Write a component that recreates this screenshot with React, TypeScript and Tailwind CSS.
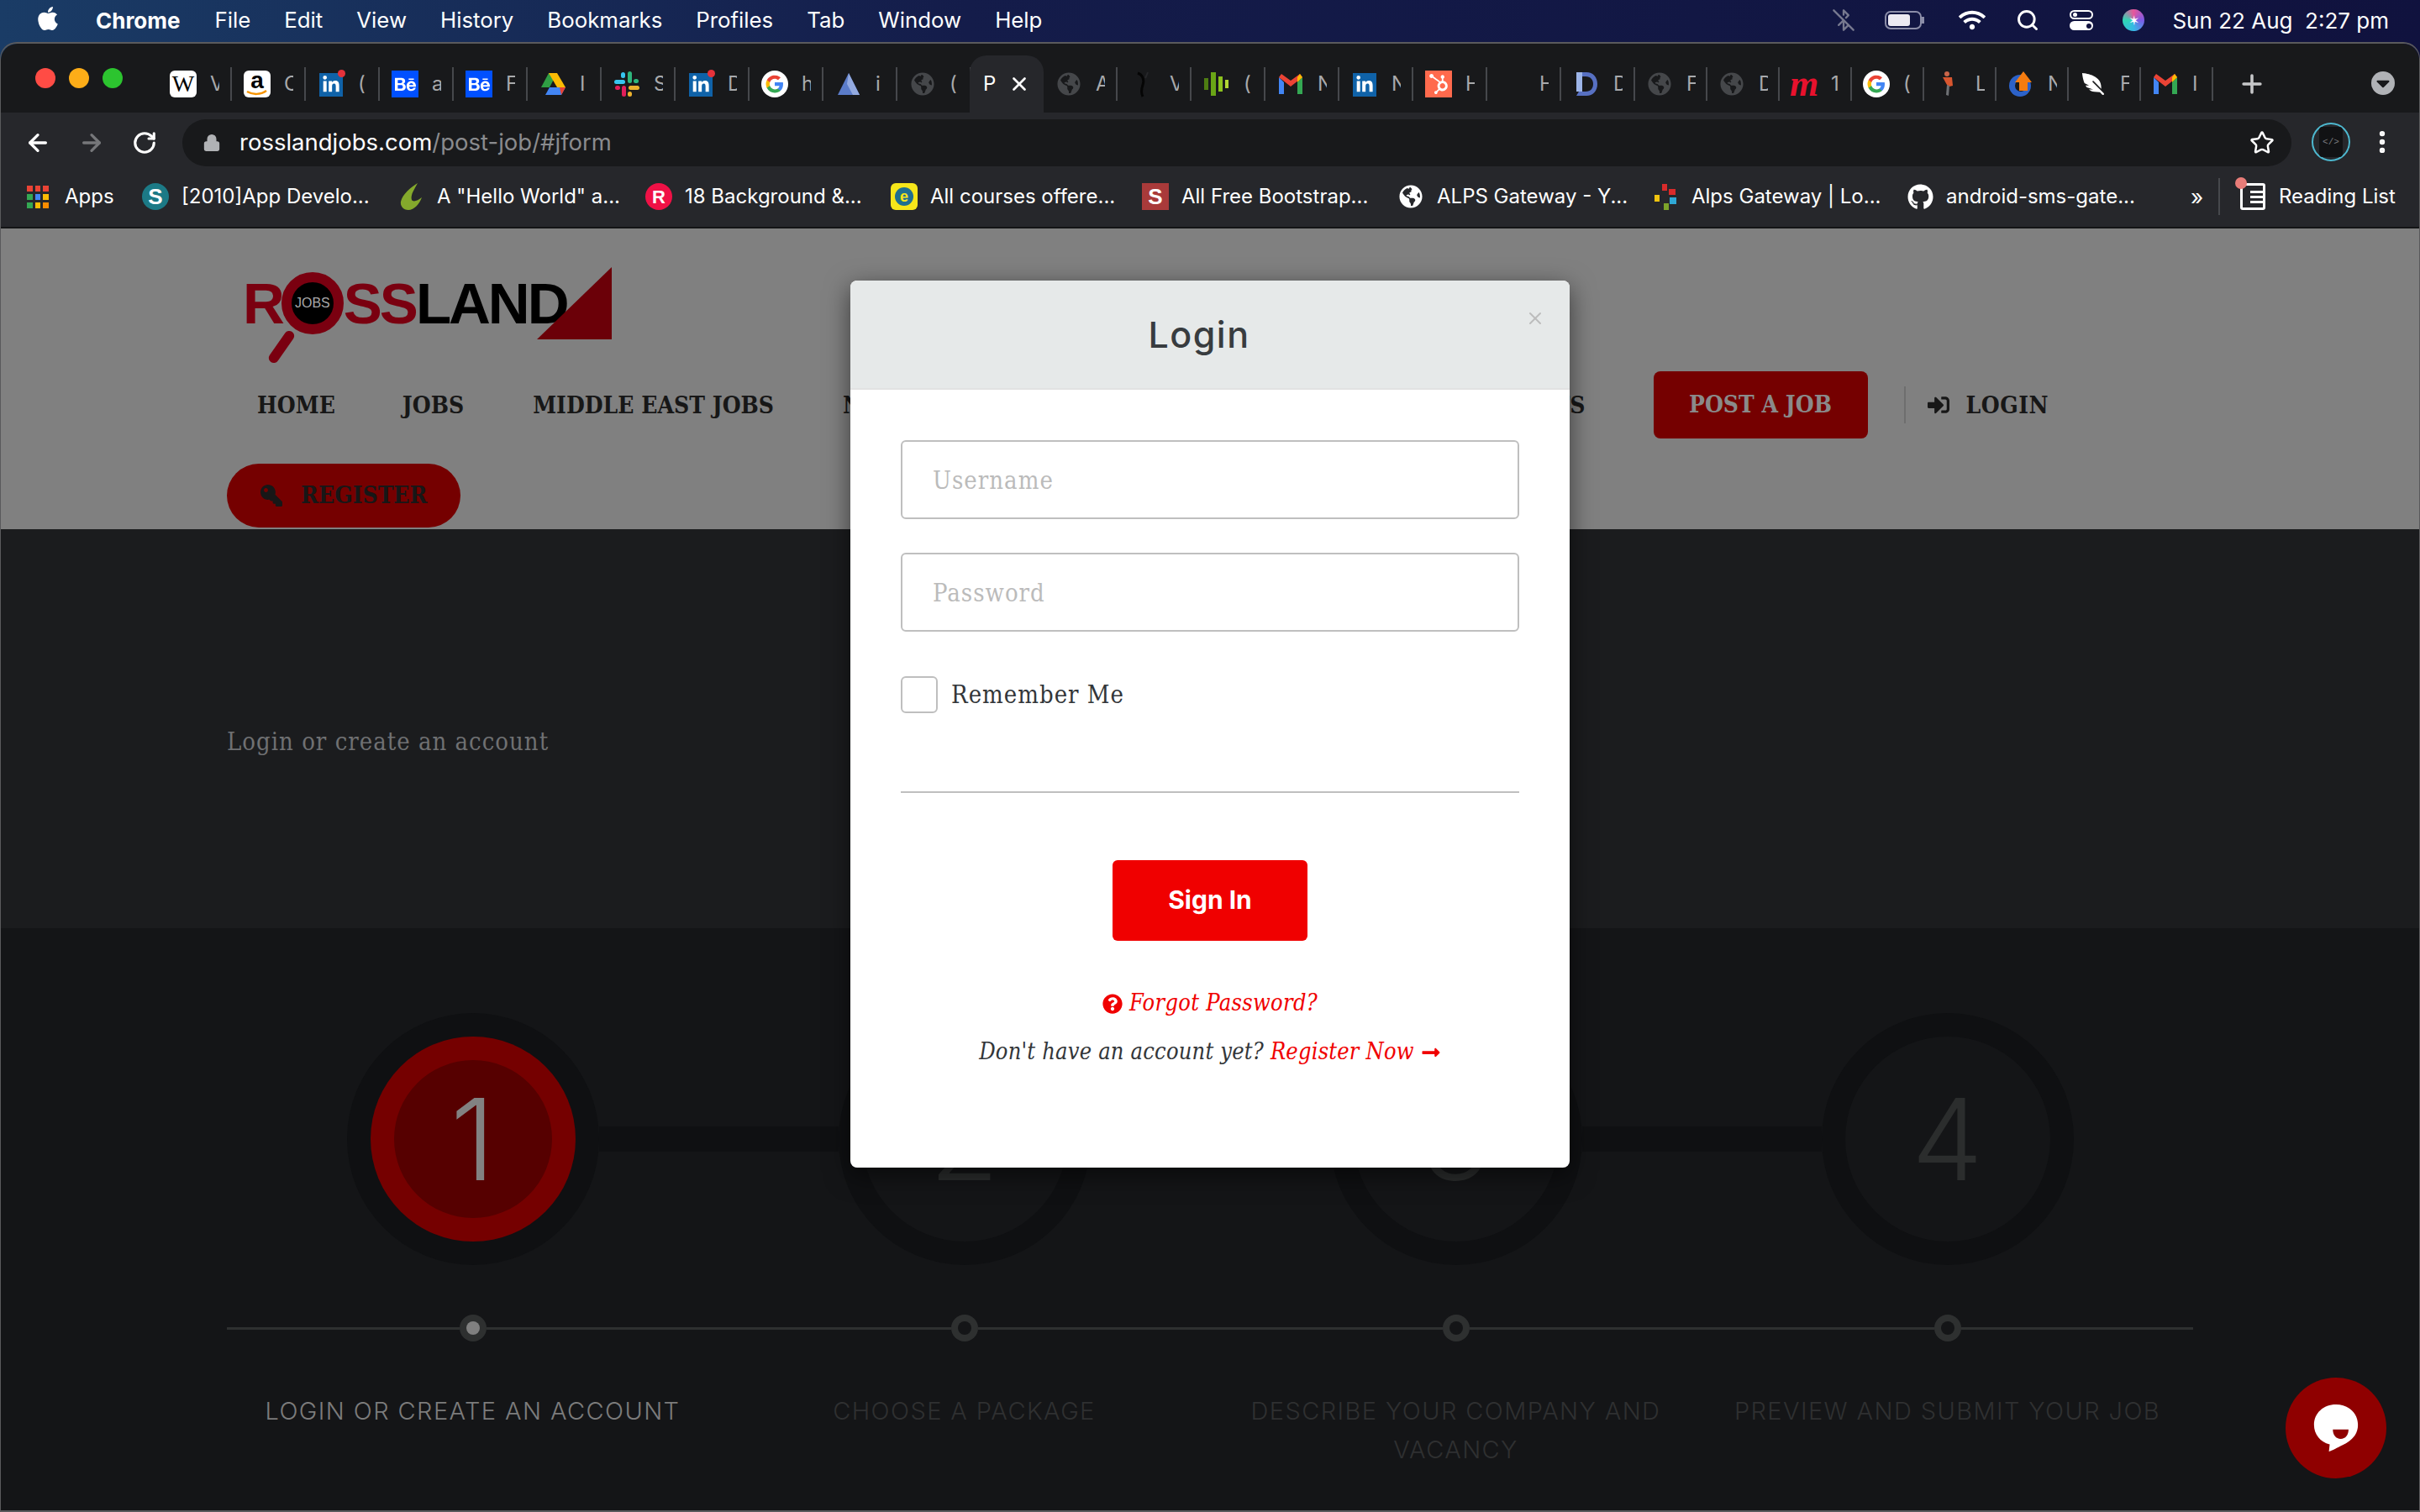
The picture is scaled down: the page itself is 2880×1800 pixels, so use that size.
import type { ReactNode } from "react";
import { ArrowLeft, ArrowRight, RotateCw, Lock, Star, MoreVertical, Plus, X, Search, BluetoothOff } from "lucide-react";
import {
  FaApple, FaLinkedinIn, FaBehance, FaGlobeAmericas, FaHubspot, FaFeatherAlt, FaGithub, FaKey,
  FaSignInAlt, FaQuestionCircle, FaLongArrowAltRight, FaWifi, FaCaretDown,
} from "react-icons/fa";

const serif = "font-['DejaVu_Serif_Condensed','DejaVu_Serif',serif]";

const menus = ["File", "Edit", "View", "History", "Bookmarks", "Profiles", "Tab", "Window", "Help"];

const leftTabs = [
  ["wiki", "V"], ["amazon", "C"], ["linkedin", "("], ["behance", "a"], ["behance", "F"],
  ["drive", "I"], ["slack", "S"], ["linkedin", "D"], ["google", "h"], ["peak", "i"], ["globe", "("],
];
const rightTabs = [
  ["globe", "A"], ["squiggle", "V"], ["bars", "("], ["gmail", "N"], ["linkedinPlain", "N"], ["hubspot", "H"],
  ["none", "H"], ["dblue", "D"], ["globe", "F"], ["globe", "D"], ["mred", "1"], ["google", "("],
  ["figure", "L"], ["upload", "N"], ["feather", "F"], ["gmail", "I"],
];

function Gmail() {
  return (
    <svg viewBox="0 0 32 32" className="w-8 h-8">
      <path d="M2 8v20h6V14z" fill="#4285f4" />
      <path d="M24 14v14h6V8z" fill="#34a853" />
      <path d="M2 8l14 11 14-11-3-4-11 8L5 4z" fill="#ea4335" />
      <path d="M24 8l3-4 3 4-6 6z" fill="#fbbc04" />
    </svg>
  );
}

function GoogleIcon() {
  return (
    <svg viewBox="0 0 32 32" className="w-8 h-8">
      <circle cx="16" cy="16" r="16" fill="#fff" />
      <path d="M26 16.3c0-.8-.1-1.5-.2-2.2H16v4.2h5.6c-.3 1.3-1 2.4-2.1 3.1v2.6h3.4c2-1.8 3.1-4.5 3.1-7.7z" fill="#4285f4" />
      <path d="M16 26.5c2.8 0 5.2-.9 6.9-2.5l-3.4-2.6c-.9.6-2.1 1-3.5 1-2.7 0-5-1.8-5.8-4.3H6.700v2.700A10.500 10.500 0 0 0 16 26.500z" fill="#34a853" />
      <path d="M10.200 18.100a6.300 6.300 0 0 1 0-4.100v-2.700H6.700a10.500 10.500 0 0 0 0 9.500z" fill="#fbbc04" />
      <path d="M16 9.700c1.500 0 2.900.5 4 1.600l3-3A10.500 10.500 0 0 0 6.700 11.300l3.500 2.700c.8-2.500 3.100-4.300 5.800-4.300z" fill="#ea4335" />
    </svg>
  );
}

function Favicon({ kind }: { kind: string }) {
  switch (kind) {
    case "wiki":
      return <div className="w-8 h-8 bg-white rounded-md flex items-center justify-center text-black text-[28px] font-['Liberation_Serif',serif]">W</div>;
    case "amazon":
      return (
        <div className="w-8 h-8 bg-white rounded-md relative flex justify-center text-black text-[28px] leading-[24px] font-bold font-['Liberation_Sans',sans-serif]">
          a
          <svg viewBox="0 0 32 32" className="absolute inset-0 w-8 h-8"><path d="M4 25c7 4 16 4 23-1" stroke="#f79400" strokeWidth="2.500" fill="none" /></svg>
        </div>
      );
    case "linkedin":
    case "linkedinPlain":
      return (
        <div className="w-8 h-8 relative flex items-center justify-center">
          <div className="w-7 h-7 mt-[2px] bg-[#0f62a8] flex items-center justify-center text-white text-[22px]"><FaLinkedinIn /></div>
          {kind === "linkedin" && <div className="absolute -top-[1px] -right-[1px] w-[9px] h-[9px] rounded-full bg-[#e5323b]" />}
        </div>
      );
    case "behance":
      return <div className="w-8 h-8 bg-[#0050ff] flex items-center justify-center text-white text-[25px]"><FaBehance /></div>;
    case "drive":
      return (
        <svg viewBox="0 0 32 32" className="w-8 h-8">
          <path d="M11 3h10l-9 17H2z" fill="#2f9e44" />
          <path d="M11 3h10l10 17H21z" fill="#fbbc04" />
          <path d="M7 29l5-9h19l-5 9z" fill="#4285f4" />
          <path d="M26 29l5-9h-7z" fill="#ea4335" />
        </svg>
      );
    case "slack":
      return (
        <svg viewBox="0 0 32 32" className="w-8 h-8">
          <rect x="1" y="11" width="13" height="5" rx="2.500" fill="#36c5f0" />
          <rect x="9" y="2" width="5" height="7" rx="2.500" fill="#36c5f0" />
          <rect x="17" y="1" width="5" height="14" rx="2.500" fill="#2eb67d" />
          <rect x="24" y="10" width="6" height="5" rx="2.500" fill="#2eb67d" />
          <rect x="18" y="18" width="13" height="5" rx="2.500" fill="#ecb22e" />
          <rect x="17" y="25" width="5" height="6" rx="2.500" fill="#ecb22e" />
          <rect x="10" y="18" width="5" height="13" rx="2.500" fill="#e01e5a" />
          <rect x="2" y="18" width="6" height="5" rx="2.500" fill="#e01e5a" />
        </svg>
      );
    case "google":
      return <GoogleIcon />;
    case "peak":
      return (
        <svg viewBox="0 0 32 32" className="w-8 h-8">
          <path d="M16 3L3 29h26z" fill="#5b7cc9" />
          <path d="M16 3l-2 13 7 13h8z" fill="#93aae0" />
        </svg>
      );
    case "globe":
      return <div className="w-8 h-8 flex items-center justify-center text-[#45474a] text-[28px]"><FaGlobeAmericas /></div>;
    case "squiggle":
      return (
        <svg viewBox="0 0 32 32" className="w-8 h-8">
          <path d="M10 3c6 2 8 8 6 14s-2 10 0 14" stroke="#050505" strokeWidth="3" fill="none" />
          <path d="M22 2c-1 3-2 5-3 7" stroke="#26272a" strokeWidth="2" fill="none" />
        </svg>
      );
    case "bars":
      return (
        <svg viewBox="0 0 32 32" className="w-8 h-8">
          <rect x="1" y="9" width="5" height="14" fill="#4e7d12" />
          <rect x="9" y="2" width="6" height="28" fill="#6aa516" />
          <rect x="18" y="7" width="5" height="18" fill="#8cc21e" />
          <rect x="26" y="11" width="4" height="10" fill="#b1d635" />
        </svg>
      );
    case "gmail":
      return <Gmail />;
    case "hubspot":
      return <div className="w-8 h-8 bg-[#ff6a4d] flex items-center justify-center text-white text-[24px]"><FaHubspot /></div>;
    case "dblue":
      return (
        <svg viewBox="0 0 32 32" className="w-8 h-8">
          <path d="M4 2h12c8 0 13 6 13 14s-5 14-13 14H4l3-5h8c6 0 9-4 9-9s-3-9-9-9H4z" fill="#5770c2" />
          <path d="M4 2h7v23H4z" fill="#9db5e8" />
        </svg>
      );
    case "mred":
      return <div className="w-8 h-8 flex items-center justify-center text-[#e8112d] text-[44px] leading-none italic font-bold font-['Liberation_Serif',serif]">m</div>;
    case "figure":
      return (
        <svg viewBox="0 0 32 32" className="w-8 h-8">
          <circle cx="14" cy="4" r="3" fill="#c9654a" />
          <path d="M9 8h11l1 10-4 1-3-2z" fill="#d8562f" />
          <path d="M14 17l3 1-1 12-3-1z" fill="#6e7175" />
        </svg>
      );
    case "upload":
      return (
        <svg viewBox="0 0 32 32" className="w-8 h-8">
          <circle cx="15" cy="18" r="13" fill="#2c62c9" />
          <circle cx="16" cy="18" r="7" fill="#18191b" />
          <path d="M19 1l10 13h-5v10H14V14H9z" fill="#f57c10" />
        </svg>
      );
    case "feather":
      return <div className="w-8 h-8 flex items-center justify-center text-white text-[26px] -scale-x-100"><FaFeatherAlt /></div>;
    default:
      return <div className="w-8 h-8" />;
  }
}

function Tab({ kind, letter, narrow }: { kind: string; letter: string; narrow?: boolean }) {
  return (
    <div className={`${narrow ? "w-[86px] pl-[13px]" : "w-[88px] pl-[14px]"} shrink-0 h-10 flex items-center border-r-2 border-[#46484c]`}>
      <Favicon kind={kind} />
      <span className="ml-[16px] w-[11px] overflow-hidden text-[24px] text-[#a9aaac] font-['Inter',sans-serif]">{letter}</span>
    </div>
  );
}

function MenuBar() {
  return (
    <div className="h-[48px] flex items-center pl-[41px] pr-[37px] text-white text-[26px] font-['Inter',sans-serif]">
      <FaApple className="text-[32px] -mt-1" />
      <span className="ml-[41px] font-bold">Chrome</span>
      <div className="ml-[41px] flex gap-[40px] text-[25.800px]">
        {menus.map((m) => <span key={m}>{m}</span>)}
      </div>
      <div className="ml-auto flex items-center">
        <BluetoothOff size={28} strokeWidth={2} className="text-[#77798f]" />
        <div className="ml-[35px] w-[44px] h-[22px] rounded-[7px] border-2 border-[#8b8da8] p-[2px]">
          <div className="w-[26px] h-full rounded-[3px] bg-[#eceaf2]" />
        </div>
        <div className="w-[3px] h-[8px] bg-[#8b8da8]" />
        <FaWifi className="ml-[41px] text-[32px]" />
        <Search size={28} strokeWidth={2.500} className="ml-[36px]" />
        <div className="ml-[36px] w-[28px] flex flex-col gap-[2px]">
          <div className="h-[11px] rounded-full border-2 border-white flex items-center pl-[2px]"><div className="w-[5px] h-[5px] rounded-full bg-white" /></div>
          <div className="h-[11px] rounded-full bg-white flex items-center justify-end pr-[2px]"><div className="w-[6px] h-[6px] rounded-full bg-[#11123f]" /></div>
        </div>
        <div className="ml-[35px] w-[26px] h-[26px] rounded-full bg-[conic-gradient(#e8569a,#7d5be6,#35b8e6,#2fd6b5,#e8569a)] flex items-center justify-center text-white text-[16px] leading-none">✶</div>
        <span className="ml-[33px] whitespace-pre">Sun 22 Aug  2:27 pm</span>
      </div>
    </div>
  );
}

function TabStrip() {
  return (
    <div className="h-[82px] pt-[14px] flex bg-[#18191b] rounded-t-[20px]">
      <div className="w-[187px] shrink-0 pl-[41px] pt-[15px] flex gap-[16px]">
        <div className="w-6 h-6 rounded-full bg-[#ff4c45]" />
        <div className="w-6 h-6 rounded-full bg-[#fdad18]" />
        <div className="w-6 h-6 rounded-full bg-[#2cc42f]" />
      </div>
      <div className="flex h-10 mt-[14px]">
        {leftTabs.map(([k, l], i) => <Tab key={i} kind={k} letter={l} />)}
      </div>
      <div className="w-[88px] h-[68px] -ml-[2px] shrink-0 bg-[#26272b] rounded-t-[20px] flex items-center pl-[16px] text-white text-[24px] font-['Inter',sans-serif]">
        <span className="w-[18px] overflow-hidden">P</span>
        <X size={26} strokeWidth={2.500} className="ml-[12px]" />
      </div>
      <div className="flex h-10 mt-[14px]">
        {rightTabs.map(([k, l], i) => <Tab key={i} kind={k} letter={l} narrow={i >= 8} />)}
      </div>
      <Plus size={34} strokeWidth={2.500} className="ml-[29px] mt-[17px] text-[#c6c7c9]" />
      <div className="ml-[125px] mt-[19px] w-[28px] h-[28px] rounded-full bg-[#b0b2b6] flex items-center justify-center text-[#18191b] text-[26px]"><FaCaretDown /></div>
    </div>
  );
}

function Toolbar() {
  return (
    <div className="h-[64px] bg-[#26272b] flex items-start">
      <div className="w-[216px] shrink-0 h-[56px] mt-[8px] pl-[28px] flex items-center gap-[32px] text-white">
        <ArrowLeft size={32} strokeWidth={2.500} />
        <ArrowRight size={32} strokeWidth={2.500} className="text-[#76777a]" />
        <RotateCw size={30} strokeWidth={2.500} />
      </div>
      <div className="w-[2510px] h-[56px] mt-[8px] rounded-full bg-[#18191b] flex items-center pl-[24px] pr-[20px] text-[27.500px] font-['Inter',sans-serif]">
        <Lock size={22} fill="#b0b2b5" className="text-[#b0b2b5]" />
        <span className="ml-[22px] text-white">rosslandjobs.com</span>
        <span className="text-[#8a8b8e]">/post-job/#jform</span>
        <Star size={30} strokeWidth={2} className="ml-auto text-white" />
      </div>
      <div className="ml-[24px] mt-[12px] w-[46px] h-[46px] rounded-full border-2 border-[#4db8cf] flex items-center justify-center">
        <div className="w-[28px] h-[36px] rounded-[4px] bg-[#111214] flex items-center justify-center text-[#77797c] text-[11px] font-['Liberation_Mono',monospace]">&lt;/&gt;</div>
      </div>
      <MoreVertical size={34} strokeWidth={2.500} className="ml-[21px] mt-[18px] text-white" />
    </div>
  );
}

const appDots = [
  "bg-[#ea4335]", "bg-[#ea4335]", "bg-[#ea4335]",
  "bg-[#34a853]", "bg-[#4285f4]", "bg-[#fbbc04]",
  "bg-[#34a853]", "bg-[#fbbc04]", "bg-[#fb8c00]",
];

const bookmarks: { icon: ReactNode; text: string; width: string }[] = [
  {
    text: "Apps",
    width: "w-[137px] gap-[19px]",
    icon: (
      <div className="grid grid-cols-3 gap-[3px] w-[26px]">
        {appDots.map((c, i) => <div key={i} className={`h-[7px] ${c}`} />)}
      </div>
    ),
  },
  {
    text: "[2010]App Develo...",
    width: "w-[304px] gap-[15px]",
    icon: <div className="w-8 h-8 rounded-full bg-[#1c7a86] flex items-center justify-center text-white text-[26px] font-bold font-['Liberation_Sans',sans-serif]">S</div>,
  },
  {
    text: 'A "Hello World" a...',
    width: "w-[295px] gap-[15px]",
    icon: (
      <svg viewBox="0 0 32 32" className="w-8 h-8">
        <path d="M24 0C16 5 6 13 4 22c-1 5 3 10 9 10 7 0 13-7 16-15-5 4-10 6-12 3-2-6 4-14 7-20z" fill="#84a92c" />
      </svg>
    ),
  },
  {
    text: "18 Background &...",
    width: "w-[292px] gap-[15px]",
    icon: <div className="w-8 h-8 rounded-full bg-[#ef1146] flex items-center justify-center text-white text-[22px] font-bold font-['Liberation_Sans',sans-serif]">R</div>,
  },
  {
    text: "All courses offere...",
    width: "w-[299px] gap-[15px]",
    icon: <div className="w-8 h-8 rounded-[6px] bg-[#f6e61a] flex items-center justify-center"><div className="w-[22px] h-[22px] rounded-full bg-[#1f6f8f] flex items-center justify-center text-[#f6e61a] text-[18px] leading-none font-bold font-['Liberation_Sans',sans-serif]">e</div></div>,
  },
  {
    text: "All Free Bootstrap...",
    width: "w-[304px] gap-[15px]",
    icon: <div className="w-8 h-8 bg-[#a93a3a] flex items-center justify-center text-white text-[26px] font-bold font-['Liberation_Sans',sans-serif]">S</div>,
  },
  {
    text: "ALPS Gateway - Y...",
    width: "w-[303px] gap-[15px]",
    icon: <div className="w-8 h-8 flex items-center justify-center text-white text-[28px]"><FaGlobeAmericas /></div>,
  },
  {
    text: "Alps Gateway | Lo...",
    width: "w-[303px] gap-[15px]",
    icon: (
      <svg viewBox="0 0 32 32" className="w-8 h-8">
        <rect x="12" y="1" width="6" height="8" fill="#d92b2b" />
        <rect x="20" y="7" width="8" height="7" fill="#d92b2b" />
        <rect x="21" y="17" width="8" height="8" fill="#2fa8d5" />
        <rect x="14" y="24" width="6" height="8" fill="#7ca32a" />
        <rect x="3" y="14" width="6" height="8" fill="#f1c40f" />
      </svg>
    ),
  },
  {
    text: "android-sms-gate...",
    width: "w-[338px] gap-[15px]",
    icon: <div className="w-8 h-8 flex items-center justify-center text-white text-[31px]"><FaGithub /></div>,
  },
];

function BookmarksBar() {
  return (
    <div className="h-[74px] bg-[#26272b] border-b-2 border-[#131416] flex items-center pl-[31px] text-white text-[24px] font-['Inter',sans-serif]">
      {bookmarks.map((b) => (
        <div key={b.text} className={`${b.width} shrink-0 flex items-center whitespace-nowrap`}>
          {b.icon}
          <span>{b.text}</span>
        </div>
      ))}
      <span className="text-[26px] w-[33px]">»</span>
      <div className="w-[2px] h-[44px] bg-[#46484c]" />
      <div className="ml-[24px] relative w-[30px] h-[32px] rounded-[3px] border-[3px] border-white flex flex-col justify-center gap-[3px] pl-[9px]">
        <div className="h-[3px] bg-white" />
        <div className="h-[3px] bg-white" />
        <div className="h-[3px] bg-white" />
        <div className="absolute -top-[10px] -left-[9px] w-[14px] h-[14px] rounded-full bg-[#e87c78]" />
      </div>
      <span className="ml-[16px]">Reading List</span>
    </div>
  );
}

function Logo() {
  return (
    <div className="flex items-center h-[88px] font-['Liberation_Sans',sans-serif] font-bold text-[69px] tracking-[-3px] leading-none">
      <span className="ml-[19px] text-[#7a0010]">R</span>
      <div className="relative w-[74px] h-[74px] -ml-[1px] rounded-full border-[12px] border-[#7a0010] bg-black flex items-center justify-center shrink-0">
        <span className="text-[16px] font-normal tracking-normal text-[#a9a9a9]">JOBS</span>
        <div className="absolute top-[55px] -left-[18px] w-[12px] h-[44px] rounded-full bg-[#7a0010] rotate-[35deg]" />
      </div>
      <span className="text-[#7a0010]">SS</span>
      <span className="text-black">LAND</span>
      <svg viewBox="0 0 90 86" className="w-[90px] h-[86px] -ml-[36px]"><path d="M89 0v86H0z" fill="#6b0008" /></svg>
    </div>
  );
}

function Header() {
  return (
    <div className={`h-[358px] bg-[#808080] pl-[269px] pt-[45px] ${serif} text-[#171717] font-bold text-[28px]`}>
      <Logo />
      <div className="mt-[37px] h-[80px] w-[2168px] flex items-center">
        <span className="ml-[36px] mt-[1px]">HOME</span>
        <span className="ml-[80px] mt-[1px]">JOBS</span>
        <span className="ml-[82px] mt-[1px]">MIDDLE EAST JOBS</span>
        <span className="ml-[82px] mt-[1px]">NURSING JOBS</span>
        <span className="ml-auto mt-[1px]">CONTACTS</span>
        <div className="ml-[81px] w-[255px] h-[80px] rounded-[8px] bg-[#750000] text-[#8a8a8a] flex items-center justify-center">POST A JOB</div>
        <div className="ml-[43px] w-[2px] h-[44px] bg-[#6e6e6e]" />
        <FaSignInAlt className="ml-[26px] text-[26px]" />
        <span className="ml-[20px] mt-[1px] tracking-[0.5px]">LOGIN</span>
      </div>
      <div className="mt-[30px] w-[278px] h-[76px] rounded-full bg-[#750000] flex items-center pl-[40px]">
        <FaKey className="text-[26px] -scale-x-100" />
        <span className="ml-[22px]">REGISTER</span>
      </div>
    </div>
  );
}

const steps = [
  { n: "1", label: "LOGIN OR CREATE AN ACCOUNT", active: true },
  { n: "2", label: "CHOOSE A PACKAGE", active: false },
  { n: "3", label: "DESCRIBE YOUR COMPANY AND VACANCY", active: false },
  { n: "4", label: "PREVIEW AND SUBMIT YOUR JOB", active: false },
];

function Steps() {
  return (
    <div className="flex-1 bg-[#141517] pt-[101px] pl-[269px]">
      <div className="w-[2340px] grid grid-cols-4 font-['Inter',sans-serif]">
        {steps.map((s, i) => (
          <div key={s.n} className="flex flex-col items-center">
            <div className="w-full flex items-center">
              <div className={`flex-1 h-[30px] ${i > 0 ? "bg-[#0f1012]" : ""}`} />
              <div className="w-[300px] h-[300px] rounded-full bg-[#0f1012] flex items-center justify-center shrink-0">
                <div className={`w-[244px] h-[244px] rounded-full flex items-center justify-center ${s.active ? "bg-[#750000]" : "bg-[#141517]"}`}>
                  <div className={`w-[188px] h-[188px] rounded-full flex items-center justify-center font-light text-[135px] leading-none ${s.active ? "bg-[#560000] text-[#828282]" : "text-[#2b2d2d]"}`}>
                    {s.n}
                  </div>
                </div>
              </div>
              <div className={`flex-1 h-[30px] ${i < 3 ? "bg-[#0f1012]" : ""}`} />
            </div>
            <div className="w-full mt-[59px] flex items-center">
              <div className="flex-1 h-[3px] bg-[#2e3030]" />
              <div className="w-[32px] h-[32px] rounded-full bg-[#2e3030] flex items-center justify-center shrink-0">
                <div className={`w-[16px] h-[16px] rounded-full ${s.active ? "bg-[#808080]" : "bg-[#141517]"}`} />
              </div>
              <div className="flex-1 h-[3px] bg-[#2e3030]" />
            </div>
            <div className={`mt-[60px] w-[510px] text-center text-[29px] tracking-[1.400px] leading-[46px] font-light ${s.active ? "text-[#7c7c7c]" : "text-[#2f3031]"}`}>
              {s.label}
            </div>
          </div>
        ))}
      </div>
    </div>
  );
}

function LoginModal() {
  return (
    <div className={`absolute left-[1011px] top-[282px] w-[856px] h-[1056px] bg-white rounded-[8px] overflow-hidden shadow-[0_8px_30px_rgba(0,0,0,0.55)] ${serif}`}>
      <div className="relative h-[130px] bg-[#e6e9e9] border-b-2 border-[#e2e2e2] pr-[26px] flex items-center justify-center font-['Inter',sans-serif] text-[#383c3f] text-[43px] font-medium tracking-[1.500px]">
        Login
        <X size={24} strokeWidth={2} className="absolute top-[33px] right-[29px] text-[#bcbcbc]" />
      </div>
      <div className="px-[60px] pt-[60px] flex flex-col">
        <input readOnly placeholder="Username" className="h-[94px] rounded-[6px] border-2 border-[#bfbfbf] pl-[36px] pt-[2px] text-[29px] tracking-[1px] placeholder:text-[#bbbbbb]" />
        <input readOnly placeholder="Password" className="mt-[40px] h-[94px] rounded-[6px] border-2 border-[#bfbfbf] pl-[36px] pt-[2px] text-[29px] tracking-[1px] placeholder:text-[#bbbbbb]" />
        <div className="mt-[52px] flex items-center">
          <div className="w-[44px] h-[44px] rounded-[6px] border-2 border-[#bfbfbf]" />
          <span className="ml-[16px] mt-[2px] text-[29px] tracking-[1px] text-[#333639]">Remember Me</span>
        </div>
        <div className="mt-[92px] h-[2px] bg-[#bfbfbf]" />
        <div className="mt-[80px] mx-auto w-[232px] h-[96px] rounded-[6px] bg-[#f00000] flex items-center justify-center text-white text-[30px] font-bold font-['Inter',sans-serif]">Sign In</div>
        <div className="mt-[58px] h-[34px] flex items-center justify-center italic text-[27px] tracking-[0.300px] text-[#f00000]">
          <FaQuestionCircle className="mr-[8px] text-[24px]" />
          Forgot Password?
        </div>
        <div className="mt-[24px] h-[34px] flex items-center justify-center italic text-[27px] tracking-[0.200px] text-[#333639] whitespace-pre">
          Don't have an account yet? <span className="text-[#f00000]">Register Now</span>
          <FaLongArrowAltRight className="ml-[8px] text-[24px] text-[#f00000]" />
        </div>
      </div>
    </div>
  );
}

export default function App() {
  return (
    <div className="w-[2880px] h-[1800px] overflow-hidden bg-[linear-gradient(90deg,#1a3c66,#141c4a_40%,#10123e)]">
      <MenuBar />
      <div className="relative mt-[2px] h-[1750px] flex flex-col rounded-t-[20px] overflow-hidden border-t-2 border-x border-b-2 border-[#5a5a5c]">
        <TabStrip />
        <Toolbar />
        <BookmarksBar />
        <Header />
        <div className={`h-[475px] bg-[#1b1c1e] pl-[269px] pt-[232px] text-[29px] tracking-[1px] text-[#6f7072] ${serif}`}>
          Login or create an account
        </div>
        <Steps />
        <LoginModal />
        <div className="absolute left-[2719px] top-[1588px] w-[120px] h-[120px] rounded-full bg-[#8f0000] flex items-center justify-center">
          <svg viewBox="0 0 60 64" className="w-[56px] h-[60px]">
            <path d="M30 2c16 0 28 11 28 26 0 13-9 21-20 26-6 3-13 7-17 8l1-9C10 50 2 40 2 28 2 13 14 2 30 2z" fill="#fff" />
            <path d="M26 34h20c0 7-4 12-10 12s-10-5-10-12z" fill="#8f0000" />
          </svg>
        </div>
      </div>
    </div>
  );
}
